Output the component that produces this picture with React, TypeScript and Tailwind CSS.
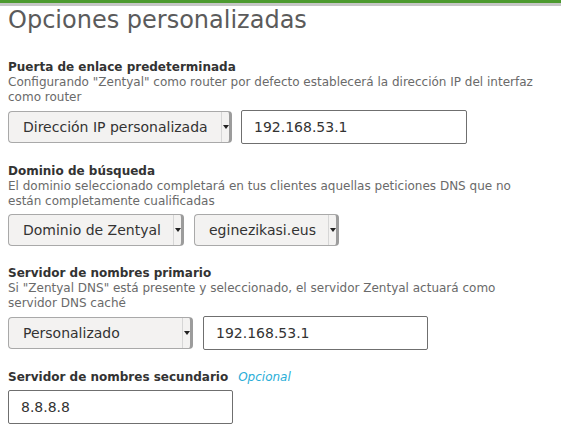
import type { ReactNode } from 'react'

const font = { fontFamily: '"DejaVu Sans", Verdana, sans-serif' }

const Select = ({ value, width }: { value: string; width: string }) => {
  return (
    <div
      className={`flex h-[32px] ${width} items-stretch rounded-[4px] border border-[#a9a9a9] border-r-[3px] border-r-[#9c9c9c] bg-[#f3f2f1]`}
    >
      <div className="flex flex-1 items-center pl-[14px] text-[14px] text-[#333]">
        {value}
      </div>
      <div className="flex w-[8px] items-center justify-center border-l border-[#d6d6d6]">
        <span className="block h-0 w-0 border-x-[3px] border-t-[4px] border-x-transparent border-t-[#222]" />
      </div>
    </div>
  )
}

const Input = ({ value, width }: { value: string; width: string }) => {
  return (
    <div
      className={`flex h-[34px] ${width} items-center rounded-[2px] border border-[#6f6f6f] bg-white pl-[12px] text-[14px] text-[#333]`}
    >
      {value}
    </div>
  )
}

const Field = ({
  label,
  extra,
  help,
  gap = 'gap-[10px]',
  children
}: {
  label: string
  extra?: string
  help?: ReactNode
  gap?: string
  children: ReactNode
}) => {
  return (
    <div className="flex flex-col">
      <div className="flex items-baseline gap-[10px]">
        <span className="text-[12px] font-bold leading-[16px] text-[#333]">{label}</span>
        {extra && (
          <span className="text-[12px] italic leading-[16px] text-[#2aaed8]">{extra}</span>
        )}
      </div>
      {help && (
        <p className="max-w-[536px] text-[12px] leading-[15px] text-[#6a6a6a]">{help}</p>
      )}
      <div className={`mt-[5px] flex items-center ${gap}`}>{children}</div>
    </div>
  )
}

export default function App() {
  return (
    <div className="h-[425px] w-[561px] overflow-hidden bg-white" style={font}>
      <div className="h-[3px] bg-[#4c9a2f]" />
      <div className="h-[3px] bg-[#c6c6c6]" />
      <div className="px-[8px]">
        <h1 className="text-[24px] leading-[28px] font-normal text-[#5b5b5b]">
          Opciones personalizadas
        </h1>
        <div className="mt-[25px] flex flex-col gap-[19px]">
          <Field
            label="Puerta de enlace predeterminada"
            gap="gap-[9px]"
            help={'Configurando "Zentyal" como router por defecto establecerá la dirección IP del interfaz como router'}
          >
            <Select value="Dirección IP personalizada" width="w-[224px]" />
            <Input value="192.168.53.1" width="w-[226px]" />
          </Field>
          <Field
            label="Dominio de búsqueda"
            help="El dominio seleccionado completará en tus clientes aquellas peticiones DNS que no están completamente cualificadas"
          >
            <Select value="Dominio de Zentyal" width="w-[176px]" />
            <Select value="eginezikasi.eus" width="w-[145px]" />
          </Field>
          <Field
            label="Servidor de nombres primario"
            help={'Si "Zentyal DNS" está presente y seleccionado, el servidor Zentyal actuará como servidor DNS caché'}
          >
            <Select value="Personalizado" width="w-[185px]" />
            <Input value="192.168.53.1" width="w-[225px]" />
          </Field>
          <Field label="Servidor de nombres secundario" extra="Opcional">
            <Input value="8.8.8.8" width="w-[225px]" />
          </Field>
        </div>
      </div>
    </div>
  )
}
